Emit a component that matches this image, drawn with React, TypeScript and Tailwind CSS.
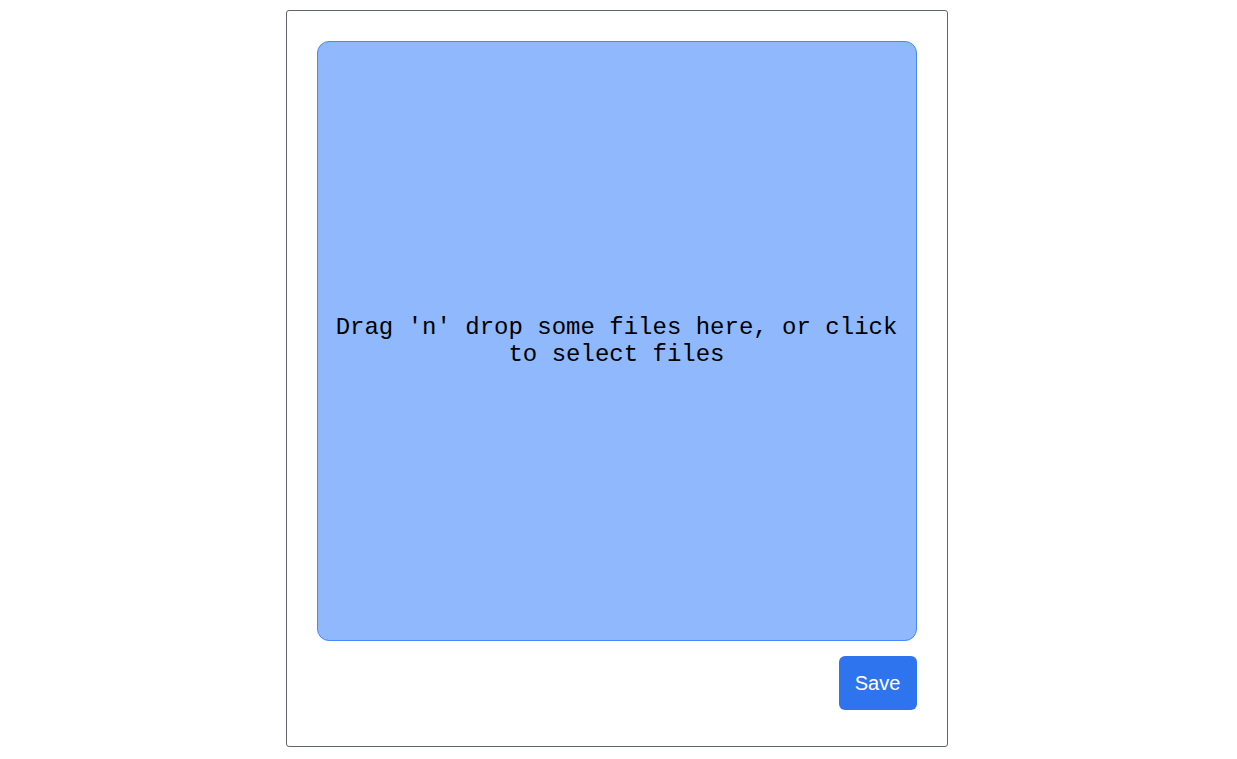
export default function App() {
  return (
    <div className="flex justify-center pt-[10px] pr-[4px]">
      <div className="flex w-[662px] flex-col rounded-[3px] border border-[#60646e] px-[30px] pt-[30px] pb-[36px]">
        <div className="flex h-[600px] w-[600px] cursor-pointer items-center justify-center rounded-[12px] border border-[#4a88f7] bg-[#8fb8fd] px-4">
          <p
            className="text-center text-[24px] leading-[27px] font-normal text-black"
            style={{ fontFamily: '"Liberation Mono", "Courier New", monospace' }}
          >
            Drag &apos;n&apos; drop some files here, or click to select files
          </p>
        </div>
        <div className="mt-[15px] flex justify-end">
          <button
            className="h-[54px] w-[78px] rounded-[6px] bg-[#2f74ef] text-[20px] font-medium text-white"
            style={{ fontFamily: '"Liberation Sans", Arial, sans-serif' }}
          >
            Save
          </button>
        </div>
      </div>
    </div>
  )
}
